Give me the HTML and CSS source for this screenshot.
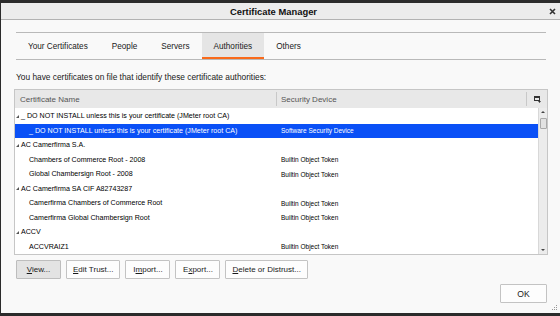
FILE: index.html
```html
<!DOCTYPE html>
<html>
<head>
<meta charset="utf-8">
<link rel="stylesheet" href="styles.css">
</head>
<body>
<div class="window">
  <div class="titlebar">
    <div class="title">Certificate Manager</div>
    <div class="close"><svg width="7" height="7" viewBox="0 0 7 7"><path d="M1 1L6 6M6 1L1 6" stroke="#333" stroke-width="1.6"/></svg></div>
  </div>
  <div class="content">
    <div class="tabs">
      <div class="tab">Your Certificates</div>
      <div class="tab">People</div>
      <div class="tab">Servers</div>
      <div class="tab active">Authorities</div>
      <div class="tab">Others</div>
    </div>
    <div class="desc">You have certificates on file that identify these certificate authorities:</div>
    <div class="tree">
      <div class="thead">
        <div class="th th1">Certificate Name</div>
        <div class="sep"></div>
        <div class="th th2">Security Device</div>
        <div class="sep"></div>
        <div class="picker"><svg width="7" height="7" viewBox="0 0 7 7"><rect x="0.5" y="0.5" width="5" height="4" fill="none" stroke="#333"/><rect x="0" y="0" width="6" height="2" fill="#333"/><path d="M4 5h3L5.5 7z" fill="#333"/></svg></div>
      </div>
      <div class="tbody">
        <div class="rows">
          <div class="row parent"><div class="c1"><span class="twisty"></span>_ DO NOT INSTALL unless this is your certificate (JMeter root CA)</div><div class="c2"></div></div>
          <div class="row child selected"><div class="c1">_ DO NOT INSTALL unless this is your certificate (JMeter root CA)</div><div class="c2">Software Security Device</div></div>
          <div class="row parent"><div class="c1"><span class="twisty"></span>AC Camerfirma S.A.</div><div class="c2"></div></div>
          <div class="row child"><div class="c1">Chambers of Commerce Root - 2008</div><div class="c2">Builtin Object Token</div></div>
          <div class="row child"><div class="c1">Global Chambersign Root - 2008</div><div class="c2">Builtin Object Token</div></div>
          <div class="row parent"><div class="c1"><span class="twisty"></span>AC Camerfirma SA CIF A82743287</div><div class="c2"></div></div>
          <div class="row child"><div class="c1">Camerfirma Chambers of Commerce Root</div><div class="c2">Builtin Object Token</div></div>
          <div class="row child"><div class="c1">Camerfirma Global Chambersign Root</div><div class="c2">Builtin Object Token</div></div>
          <div class="row parent"><div class="c1"><span class="twisty"></span>ACCV</div><div class="c2"></div></div>
          <div class="row child"><div class="c1">ACCVRAIZ1</div><div class="c2">Builtin Object Token</div></div>
        </div>
        <div class="scrollbar">
          <div class="arrow up"></div>
          <div class="thumb"></div>
          <div class="track"></div>
          <div class="arrow down"></div>
        </div>
      </div>
    </div>
    <div class="buttons">
      <div class="btn default"><u>V</u>iew...</div>
      <div class="btn"><u>E</u>dit Trust...</div>
      <div class="btn">I<u>m</u>port...</div>
      <div class="btn">E<u>x</u>port...</div>
      <div class="btn"><u>D</u>elete or Distrust...</div>
    </div>
    <div class="footer">
      <div class="btn ok">OK</div>
    </div>
  </div>
  <div class="grip"><svg width="6" height="6" viewBox="0 0 6 6" fill="#999"><rect x="4" y="0" width="1" height="1"/><rect x="2" y="2" width="1" height="1"/><rect x="4" y="2" width="1" height="1"/><rect x="0" y="4" width="1" height="1"/><rect x="2" y="4" width="1" height="1"/><rect x="4" y="4" width="1" height="1"/></svg></div>
</div>
</body>
</html>
```
FILE: styles.css
```css
* { box-sizing: border-box; }
html, body { margin: 0; padding: 0; }
body {
  background: #2b2b2b;
  width: 560px;
  height: 316px;
  overflow: hidden;
  font-family: "Liberation Sans", Arial, sans-serif;
  color: #222;
}
.window {
  position: relative;
  margin: 3px 0 0 1px;
  width: 559px;
  height: 310px;
  background: #f9f9f9;
  display: flex;
  flex-direction: column;
}
.titlebar {
  height: 17px;
  background: #ececec;
  border-bottom: 1px solid #b2b2b2;
  display: flex;
  align-items: center;
}
.title {
  flex: 1;
  text-align: center;
  font-weight: bold;
  font-size: 9.4px;
  color: #111;
}
.close {
  width: 14px;
  display: flex;
  justify-content: center;
  align-items: center;
  padding-right: 1px;
}
.content {
  display: flex;
  flex-direction: column;
  padding: 0 12px 0 13px;
  flex: 1;
}
.tabs {
  margin: 12px 2px 0 2px;
  height: 28px;
  border-top: 1px solid #b9b9b9;
  border-bottom: 1px solid #b9b9b9;
  display: flex;
}
.tab {
  padding: 0 12px;
  display: flex;
  align-items: center;
  font-size: 8.2px;
  color: #1a1a1a;
}
.tab.active {
  background: #e5e5e5;
  border-bottom: 2px solid #f96a1b;
  padding-top: 2px;
}
.desc {
  margin: 12px 0 0 2px;
  font-size: 8.35px;
  line-height: 11px;
  color: #1a1a1a;
}
.tree {
  margin-top: 6px;
  height: 166px;
  border: 1px solid #c6c6c6;
  background: #fff;
  display: flex;
  flex-direction: column;
}
.thead {
  height: 18px;
  background: #e8e8e8;
  display: flex;
  align-items: center;
}
.th {
  font-size: 8px;
  color: #555;
}
.th1 { width: 261px; padding-left: 5px; }
.th2 { width: 249px; padding-left: 4px; }
.sep {
  width: 1px;
  height: 14px;
  background: #c8c8c8;
}
.picker {
  flex: 1;
  display: flex;
  justify-content: center;
  align-items: center;
}
.tbody {
  flex: 1;
  display: flex;
  overflow: hidden;
}
.rows {
  flex: 1;
  display: flex;
  flex-direction: column;
  padding-top: 1px;
}
.row {
  height: 14.5px;
  display: grid;
  grid-template-columns: 262px 1fr;
  align-items: center;
  flex-shrink: 0;
}
.c1 {
  font-size: 7.1px;
  white-space: nowrap;
  color: #000;
  display: flex;
  align-items: center;
}
.c2 {
  font-size: 6.5px;
  padding-left: 4px;
  color: #000;
  white-space: nowrap;
}
.parent .c1 { padding-left: 1px; }
.child .c1 { padding-left: 14px; }
.twisty {
  width: 3px;
  height: 3px;
  margin-right: 2px;
  border-style: solid;
  border-width: 0 0 3px 3px;
  border-color: transparent transparent #555 transparent;
}
.selected {
  background: #0a50f6;
}
.selected .c1, .selected .c2 { color: #fff; }
.scrollbar {
  width: 9px;
  background: #ececec;
  border-left: 1px solid #d8d8d8;
  display: flex;
  flex-direction: column;
  align-items: center;
}
.arrow {
  width: 0;
  height: 0;
  border-left: 2px solid transparent;
  border-right: 2px solid transparent;
  margin: 3px 0;
}
.arrow.up { border-bottom: 2px solid #444; }
.arrow.down { border-top: 2px solid #444; }
.thumb {
  width: 7px;
  height: 11px;
  margin-top: 2px;
  background: #e2e2e2;
  border: 1px solid #a9a9a9;
  border-radius: 1px;
}
.track { flex: 1; }
.buttons {
  margin: 5px 0 0 2px;
  display: flex;
  gap: 5px;
}
.btn {
  height: 19px;
  min-width: 45px;
  padding: 0 6px;
  display: flex;
  justify-content: center;
  align-items: center;
  font-size: 8px;
  color: #1a1a1a;
  background: #fdfdfd;
  border: 1px solid #c3c3c3;
  border-radius: 1px;
}
.btn.default {
  background: #e3e3e3;
  border-color: #bdbdbd;
}
.btn u { text-decoration-thickness: 1px; text-underline-offset: 1px; }
.footer {
  margin-top: 5px;
  display: flex;
  justify-content: flex-end;
  padding-right: 1px;
}
.btn.ok {
  width: 47px;
  height: 19px;
  font-size: 8.6px;
}
.grip {
  position: absolute;
  right: 2px;
  bottom: 2px;
  width: 6px;
  height: 6px;
  display: flex;
}
```
